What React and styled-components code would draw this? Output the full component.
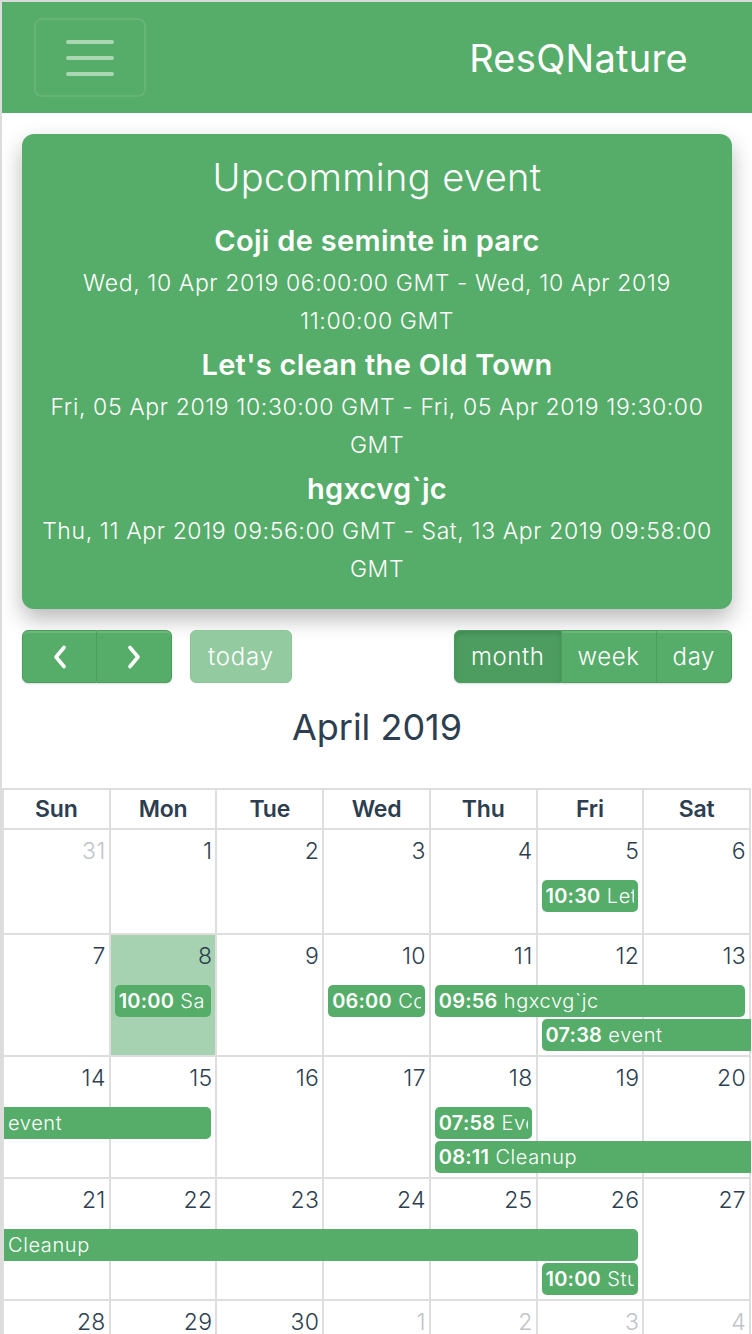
import React from 'react';
import styled, { createGlobalStyle } from 'styled-components';

const GREEN = '#56ac69';
const GREEN_DARK = '#4c9c5e';
const INK = '#2c3e50';
const LINE = '#dedede';
const FONT = `"Inter", "Lato", sans-serif`;

const Global = createGlobalStyle`
  html, body { margin: 0; padding: 0; background: #fff; }
  body { font-family: ${FONT}; -webkit-font-smoothing: antialiased; }
  * { box-sizing: border-box; }
`;

const Page = styled.div`
  border-top: 2px solid #d8d8d8;
  border-left: 2px solid #dcdcdc;
  min-height: 1334px;
  overflow: hidden;
`;

const NavBar = styled.nav`
  height: 111px;
  background: ${GREEN};
  display: flex;
  align-items: center;
  justify-content: space-between;
  padding: 0 64px 0 32px;
`;

const Toggler = styled.button`
  width: 112px;
  height: 79px;
  border: 2px solid rgba(255, 255, 255, 0.1);
  border-radius: 8px;
  background: transparent;
  display: flex;
  align-items: center;
  justify-content: center;
  padding: 0;
`;

const Brand = styled.span`
  color: #fff;
  font-size: 38px;
  font-weight: 400;
  letter-spacing: 0.3px;
`;

const Card = styled.section`
  margin: 21px 20px 0;
  background: ${GREEN};
  border-radius: 12px;
  padding: 20px 16px 19px;
  box-shadow: 0 10px 22px rgba(0, 0, 0, 0.28);
  color: #fff;
  text-align: center;
`;

const CardTitle = styled.h1`
  margin: 0 0 18px;
  font-size: 38px;
  line-height: 46px;
  font-weight: 300;
  letter-spacing: 0.4px;
`;

const EventName = styled.h3`
  margin: 0;
  font-size: 29px;
  line-height: 46px;
  font-weight: 600;
  letter-spacing: 0.3px;
`;

const EventDate = styled.p`
  margin: 0 0 2px;
  font-size: 23px;
  line-height: 38px;
  font-weight: 300;
  letter-spacing: 0.6px;
`;

const Toolbar = styled.div`
  margin: 21px 20px 0;
  display: flex;
  align-items: center;
  justify-content: space-between;
`;

const Left = styled.div`
  display: flex;
  align-items: center;
  gap: 18px;
`;

const Group = styled.div`
  display: flex;
  border-radius: 6px;
  box-shadow: 0 1px 2px rgba(0, 0, 0, 0.15);
`;

const Btn = styled.button`
  height: 53px;
  min-width: ${p => p.$w || 0}px;
  padding: 0 16px;
  border: 1px solid ${GREEN_DARK};
  border-left-width: ${p => (p.$first ? 1 : 0)}px;
  background: ${p => (p.$active ? '#4d9d60' : GREEN)};
  box-shadow: ${p => (p.$active ? 'inset 0 3px 5px rgba(0,0,0,0.12)' : 'inset 0 2px 0 rgba(255,255,255,0.12)')};
  color: #fff;
  font-family: ${FONT};
  font-size: 24px;
  font-weight: 300;
  letter-spacing: 0.6px;
  display: flex;
  align-items: center;
  justify-content: center;
  &:first-child { border-radius: 6px 0 0 6px; }
  &:last-child { border-radius: 0 6px 6px 0; }
`;

const TodayBtn = styled.button`
  height: 53px;
  padding: 0 17px;
  border: 1px solid #8cc599;
  border-radius: 6px;
  background: #94caa0;
  color: #fff;
  font-family: ${FONT};
  font-size: 24px;
  font-weight: 300;
  letter-spacing: 0.8px;
`;

const MonthTitle = styled.h2`
  margin: 21px 0 38px;
  text-align: center;
  font-size: 36px;
  line-height: 46px;
  font-weight: 400;
  color: ${INK};
`;

const Table = styled.div`
  margin-right: 1px;
  border-top: 2px solid ${LINE};
  border-left: 2px solid ${LINE};
`;

const HeadRow = styled.div`
  display: grid;
  grid-template-columns: repeat(7, minmax(0, 1fr));
`;

const HeadCell = styled.div`
  height: 40px;
  border-right: 2px solid ${LINE};
  border-bottom: 2px solid ${LINE};
  display: flex;
  align-items: center;
  justify-content: center;
  font-size: 23px;
  font-weight: 600;
  letter-spacing: -0.2px;
  color: ${INK};
`;

const Week = styled.div`
  display: grid;
  grid-template-columns: repeat(7, minmax(0, 1fr));
  grid-template-rows: 50px auto auto 1fr;
  min-height: 105px;
`;

const DayCell = styled.div`
  grid-row: 1 / -1;
  grid-column: ${p => p.$col};
  border-right: 2px solid ${LINE};
  border-bottom: 2px solid ${LINE};
  background: ${p => (p.$today ? '#a6d2b1' : 'transparent')};
`;

const DayNum = styled.div`
  grid-row: 1;
  grid-column: ${p => p.$col};
  padding: 7px 5px 0 0;
  text-align: right;
  font-size: 23px;
  line-height: 28px;
  font-weight: 300;
  letter-spacing: 0.3px;
  color: ${p => (p.$other ? '#bfc3c9' : INK)};
`;

const Event = styled.div`
  grid-row: ${p => p.$level + 1};
  grid-column: ${p => p.$col} / span ${p => p.$span};
  min-width: 0;
  height: 32px;
  margin: 0 ${p => (p.$contR ? 0 : 6)}px 2px ${p => (p.$contL ? 0 : 4)}px;
  padding: 0 4px;
  background: ${GREEN};
  color: #fff;
  border-radius: ${p => `${p.$contL ? 0 : 5}px ${p.$contR ? 0 : 5}px ${p.$contR ? 0 : 5}px ${p.$contL ? 0 : 5}px`};
  position: relative;
  z-index: 1;
`;

const EventContent = styled.div`
  font-size: 20px;
  font-weight: 300;
  line-height: 32px;
  letter-spacing: 0.6px;
  white-space: nowrap;
  overflow: hidden;
  b { font-weight: 600; letter-spacing: 0.2px; }
`;

const Filler = styled.div`
  grid-row: 4;
  grid-column: 1;
  height: 4px;
`;

const Hamburger = () => (
  <svg width="50" height="38" viewBox="0 0 50 38">
    <g stroke="rgba(255,255,255,0.5)" strokeWidth="4" strokeLinecap="round">
      <line x1="3" y1="3" x2="47" y2="3" />
      <line x1="3" y1="19" x2="47" y2="19" />
      <line x1="3" y1="35" x2="47" y2="35" />
    </g>
  </svg>
);

const Chevron = ({ dir }) => (
  <svg width="16" height="26" viewBox="0 0 16 26">
    <path
      d={dir === 'left' ? 'M12 3.5 L4 13 L12 22.5' : 'M4 3.5 L12 13 L4 22.5'}
      fill="none"
      stroke="#fff"
      strokeWidth="3.6"
      strokeLinecap="round"
      strokeLinejoin="round"
    />
  </svg>
);

const upcoming = [
  { name: 'Coji de seminte in parc', date: 'Wed, 10 Apr 2019 06:00:00 GMT - Wed, 10 Apr 2019 11:00:00 GMT' },
  { name: "Let's clean the Old Town", date: 'Fri, 05 Apr 2019 10:30:00 GMT - Fri, 05 Apr 2019 19:30:00 GMT' },
  { name: 'hgxcvg`jc', date: 'Thu, 11 Apr 2019 09:56:00 GMT - Sat, 13 Apr 2019 09:58:00 GMT' },
];

const heads = ['Sun', 'Mon', 'Tue', 'Wed', 'Thu', 'Fri', 'Sat'];

const weeks = [
  {
    days: [[31, true], [1], [2], [3], [4], [5], [6]],
    events: [{ col: 6, span: 1, level: 1, time: '10:30', title: "Let's clean the Old Town" }],
  },
  {
    days: [[7], [8], [9], [10], [11], [12], [13]],
    today: 2,
    events: [
      { col: 2, span: 1, level: 1, time: '10:00', title: 'Sa plantam copaci' },
      { col: 4, span: 1, level: 1, time: '06:00', title: 'Coji de seminte in parc' },
      { col: 5, span: 3, level: 1, time: '09:56', title: 'hgxcvg`jc' },
      { col: 6, span: 2, level: 2, time: '07:38', title: 'event', contR: true },
    ],
  },
  {
    days: [[14], [15], [16], [17], [18], [19], [20]],
    events: [
      { col: 1, span: 2, level: 1, title: 'event', contL: true },
      { col: 5, span: 1, level: 1, time: '07:58', title: 'Eveniment' },
      { col: 5, span: 3, level: 2, time: '08:11', title: 'Cleanup', contR: true },
    ],
  },
  {
    days: [[21], [22], [23], [24], [25], [26], [27]],
    events: [
      { col: 1, span: 6, level: 1, title: 'Cleanup', contL: true },
      { col: 6, span: 1, level: 2, time: '10:00', title: 'Studiu' },
    ],
  },
  {
    days: [[28], [29], [30], [1, true], [2, true], [3, true], [4, true]],
    events: [],
  },
];

export default function App() {
  return (
    <>
      <Global />
      <Page>
        <NavBar>
          <Toggler aria-label="menu"><Hamburger /></Toggler>
          <Brand>ResQNature</Brand>
        </NavBar>

        <Card>
          <CardTitle>Upcomming event</CardTitle>
          {upcoming.map(e => (
            <React.Fragment key={e.name}>
              <EventName>{e.name}</EventName>
              <EventDate>{e.date}</EventDate>
            </React.Fragment>
          ))}
        </Card>

        <Toolbar>
          <Left>
            <Group>
              <Btn $first $w={75}><Chevron dir="left" /></Btn>
              <Btn $w={75}><Chevron dir="right" /></Btn>
            </Group>
            <TodayBtn>today</TodayBtn>
          </Left>
          <Group>
            <Btn $first $active>month</Btn>
            <Btn>week</Btn>
            <Btn>day</Btn>
          </Group>
        </Toolbar>

        <MonthTitle>April 2019</MonthTitle>

        <Table>
          <HeadRow>
            {heads.map(h => <HeadCell key={h}>{h}</HeadCell>)}
          </HeadRow>
          {weeks.map((w, wi) => (
            <Week key={wi}>
              {w.days.map((d, i) => (
                <DayCell key={'c' + i} $col={i + 1} $today={w.today === i + 1} />
              ))}
              {w.days.map((d, i) => (
                <DayNum key={'n' + i} $col={i + 1} $other={d[1]}>{d[0]}</DayNum>
              ))}
              {w.events.map((e, i) => (
                <Event key={'e' + i} $col={e.col} $span={e.span} $level={e.level} $contL={e.contL} $contR={e.contR}>
                  <EventContent>
                    {e.time && <b>{e.time}</b>}{e.time ? ' ' : ''}{e.title}
                  </EventContent>
                </Event>
              ))}
              <Filler />
            </Week>
          ))}
        </Table>
      </Page>
    </>
  );
}
